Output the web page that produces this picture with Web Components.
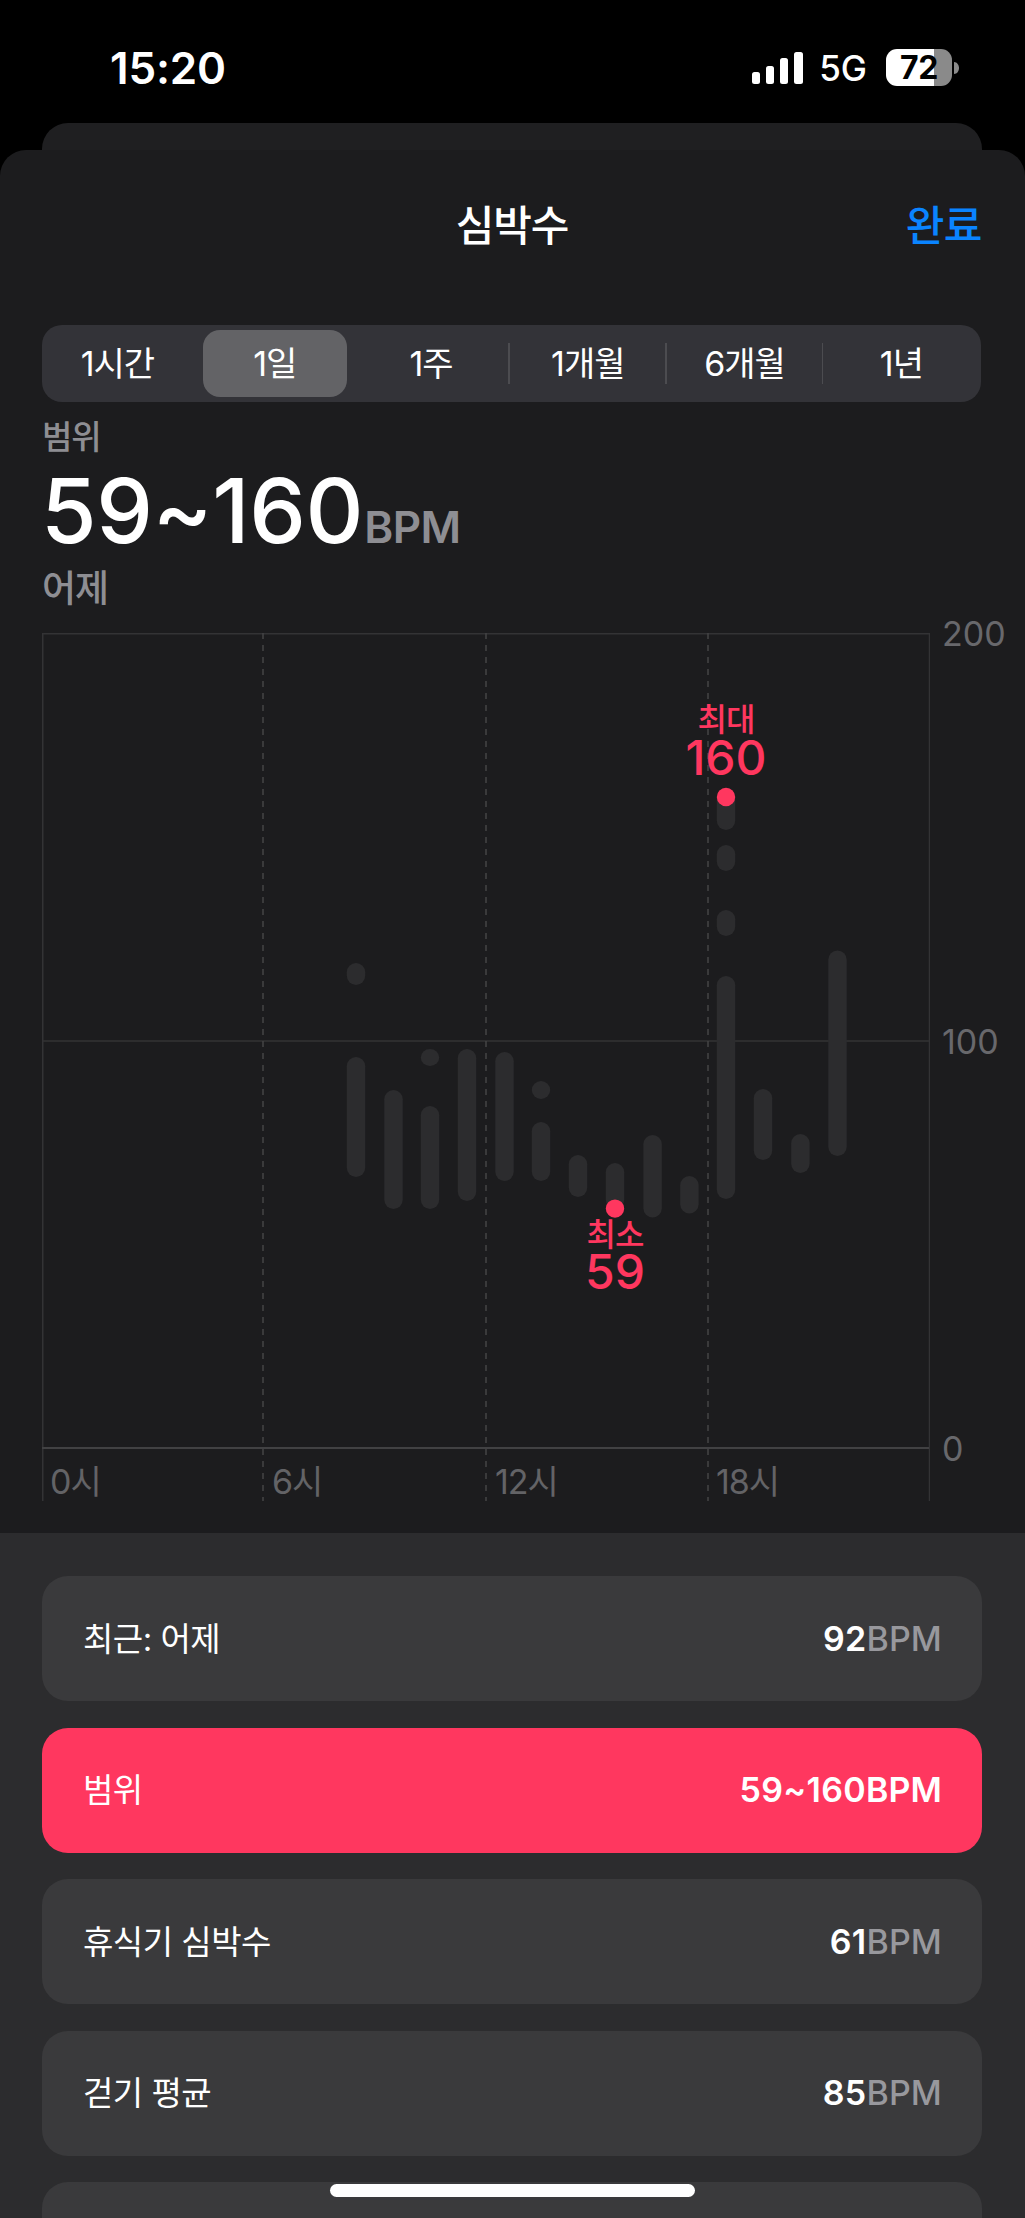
<!DOCTYPE html>
<html lang="ko">
<head>
<meta charset="utf-8">
<title>심박수</title>
<style>
  html, body { margin: 0; background: #000; }
  body {
    width: 1025px;
    height: 2218px;
    overflow: hidden;
    position: relative;
    font-family: Inter, "Noto Sans CJK KR", sans-serif;
    color: #fff;
  }
</style>
</head>
<body>
  <status-bar time="15:20" network="5G" battery="72"></status-bar>
  <hr-sheet>
    <sheet-header slot="top" action="완료">심박수</sheet-header>
    <segment-control slot="top" selected="1" items="1시간,1일,1주,1개월,6개월,1년"></segment-control>
    <range-summary slot="top" label="범위" value="59~160" unit="BPM" period="어제"></range-summary>
    <hr-chart slot="top"></hr-chart>

    <stat-row name="최근: 어제" value="92" unit="BPM"></stat-row>
    <stat-row name="범위" value="59~160" unit="BPM" active></stat-row>
    <stat-row name="휴식기 심박수" value="61" unit="BPM"></stat-row>
    <stat-row name="걷기 평균" value="85" unit="BPM"></stat-row>
    <stat-row></stat-row>
  </hr-sheet>
  <home-indicator></home-indicator>

<script>
class StatusBar extends HTMLElement {
  constructor() {
    super();
    this.attachShadow({ mode: 'open' });
    const level = 72;
    this.shadowRoot.innerHTML = `
    <style>
      :host {
        display: flex;
        align-items: center;
        height: 123px;
        box-sizing: border-box;
        padding: 12px 65px 0 110px;
        color: #fff;
      }
      #time {
        flex: 1;
        font-size: 44px;
        font-weight: 600;
        letter-spacing: -0.2px;
        line-height: 50px;
      }
      #network {
        margin: 0 19px 0 16px;
        font-size: 35px;
        font-weight: 500;
        line-height: 40px;
      }
      #battery {
        width: 66px;
        height: 37px;
        border-radius: 11px;
        background: linear-gradient(90deg, #fff 0 ${level}%, #8a8a8a ${level}% 100%);
        color: #000;
        font-size: 32px;
        font-weight: 700;
        letter-spacing: -0.5px;
        line-height: 37px;
        text-align: center;
      }
      svg { display: block; }
    </style>
    <svg width="51" height="32" viewBox="0 0 51 32" fill="#fff">
      <rect x="0" y="20" width="8" height="12" rx="2.5"/>
      <rect x="14" y="14" width="8" height="18" rx="2.5"/>
      <rect x="28" y="6" width="8" height="26" rx="2.5"/>
      <rect x="42" y="0" width="9" height="32" rx="2.5"/>
    </svg>
    <span id="network"></span>
    <span id="battery"></span>
    <svg width="6" height="12" viewBox="0 0 6 12" style="margin-left:2px"><path d="M0 0c3 0 5 3 5 6s-2 6-5 6z" fill="#8a8a8a"/></svg>
    `;
    const root = this.shadowRoot;
    const time = document.createElement('span');
    time.id = 'time';
    time.textContent = this.getAttribute('time');
    root.insertBefore(time, root.querySelector('svg'));
    root.querySelector('#network').textContent = this.getAttribute('network');
    root.querySelector('#battery').textContent = this.getAttribute('battery');
  }
}

class HrSheet extends HTMLElement {
  constructor() {
    super();
    this.attachShadow({ mode: 'open' });
    this.shadowRoot.innerHTML = `
    <style>
      :host { display: block; }
      #behind {
        height: 27px;
        margin: 0 43px 0 42px;
        background: #1f1f21;
        border-radius: 26px 26px 0 0;
      }
      #sheet {
        background: #1c1c1e;
        border-radius: 26px 26px 0 0;
        padding-bottom: 30px;
      }
      #panel {
        display: flex;
        flex-direction: column;
        gap: 26.5px;
        padding: 43px 43px 0 42px;
        background: #2c2c2e;
      }
    </style>
    <div id="behind"></div>
    <section id="sheet"><slot name="top"></slot></section>
    <section id="panel"><slot></slot></section>
    `;
  }
}

class SheetHeader extends HTMLElement {
  constructor() {
    super();
    this.attachShadow({ mode: 'open' });
    this.shadowRoot.innerHTML = `
    <style>
      :host {
        display: grid;
        grid-template-columns: 1fr auto 1fr;
        align-items: center;
        box-sizing: border-box;
        height: 146px;
        padding: 5px 43px 0 42px;
        font-size: 42px;
        line-height: 50px;
      }
      #title { grid-column: 2; font-weight: 500; letter-spacing: -1.2px; color: #fff; }
      #action { justify-self: end; font-weight: 500; letter-spacing: -0.5px; color: #0a84ff; }
    </style>
    <span id="title"><slot></slot></span>
    <span id="action"></span>
    `;
    this.shadowRoot.querySelector('#action').textContent = this.getAttribute('action');
  }
}

class SegmentControl extends HTMLElement {
  constructor() {
    super();
    this.attachShadow({ mode: 'open' });
    const items = this.getAttribute('items').split(',');
    const selected = Number(this.getAttribute('selected'));
    this.shadowRoot.innerHTML = `
    <style>
      :host {
        display: block;
        height: 77px;
        margin: 29px 44px 0 42px;
        padding: 5px 0;
        box-sizing: border-box;
        background: #333338;
        border-radius: 20px;
        color: #fff;
        font-size: 34px;
        letter-spacing: -1px;
        line-height: 67px;
      }
      #track {
        display: grid;
        grid-template-columns: repeat(6, 156.8px);
        margin-left: -3px;
      }
      .seg {
        position: relative;
        height: 67px;
        text-align: center;
      }
      .seg.on {
        margin: 0 6px 0 7px;
        background: #636366;
        border-radius: 17px;
      }
      .seg.div::before {
        content: '';
        position: absolute;
        left: -1px;
        top: 13px;
        height: 41px;
        width: 1.5px;
        background: #4c4c50;
      }
    </style>
    <div id="track">
    ${items.map((t, i) => {
      const divided = i > selected + 1;
      return `<div class="seg${i === selected ? ' on' : ''}${divided ? ' div' : ''}">${t}</div>`;
    }).join('')}
    </div>
    `;
  }
}

class RangeSummary extends HTMLElement {
  constructor() {
    super();
    this.attachShadow({ mode: 'open' });
    this.shadowRoot.innerHTML = `
    <style>
      :host {
        display: block;
        margin: 15px 43px 24px 42px;
        color: #8e8e93;
      }
      .small {
        font-size: 33px;
        line-height: 40px;
        letter-spacing: -1px;
        font-weight: 500;
      }
      #big {
        margin: 4px 0 8px -1px;
        line-height: 100px;
        font-size: 90px;
        font-weight: 500;
        letter-spacing: -0.4px;
        color: #fff;
      }
      #unit { font-size: 44px; font-weight: 600; line-height: 0; letter-spacing: -0.5px; color: #8e8e93; margin-left: 1px; }
      #period { font-size: 37px; }
    </style>
    <div class="small" id="label"></div>
    <div id="big"><span id="value"></span><span id="unit"></span></div>
    <div class="small" id="period"></div>
    `;
    for (const key of ['label', 'value', 'unit', 'period']) {
      this.shadowRoot.querySelector('#' + key).textContent = this.getAttribute(key);
    }
  }
}

// chart geometry is in px from the plot's top left corner (page 42,633)
const PLOT_W = 887, PLOT_H = 815, TOTAL_H = 870;
const BAR_W = 18.4;
const BARS = [
  [314, [[330, 352], [424, 544]]],
  [351.5, [[457, 576]]],
  [388, [[416, 433], [473, 576]]],
  [425, [[416, 568]]],
  [462.5, [[419, 548]]],
  [499, [[448, 466], [489, 548]]],
  [536, [[522, 564]]],
  [573, [[530, 576]]],
  [610.6, [[502, 584.5]]],
  [647.4, [[543, 580.5]]],
  [684, [[155, 197], [212, 238], [277, 303], [343, 566]]],
  [721, [[456, 527]]],
  [758.4, [[501, 540]]],
  [795.5, [[317.5, 523]]],
];
const GRID_X = [221, 444, 666];
const HOURS = [['0시', 8], ['6시', 230], ['12시', 453], ['18시', 674]];
const TICKS = [['200', 0], ['100', 408], ['0', 815]];

class HrChart extends HTMLElement {
  constructor() {
    super();
    this.attachShadow({ mode: 'open' });
    const bars = BARS.map(([x, segs]) => segs.map(([a, b]) =>
      `<rect x="${x - BAR_W / 2}" y="${a}" width="${BAR_W}" height="${b - a}" rx="${BAR_W / 2}"/>`
    ).join('')).join('');
    this.shadowRoot.innerHTML = `
    <style>
      :host {
        display: block;
        position: relative;
        height: ${TOTAL_H}px;
        margin-left: 42px;
        font-size: 34px;
        color: #636366;
      }
      svg { position: absolute; left: 0; top: 0; }
      span { position: absolute; line-height: 40px; white-space: nowrap; }
      .hour { top: 829px; letter-spacing: -1px; }
      .tick { left: 900px; margin-top: -19px; color: #68686c; }
      .pink { color: #ff375f; transform: translateX(-50%); }
      .name { font-size: 32px; line-height: 30px; font-weight: 500; letter-spacing: -1px; }
      .num { font-size: 48px; line-height: 44px; font-weight: 500; }
    </style>
    <svg width="${PLOT_W + 1}" height="${TOTAL_H}" viewBox="0 0 ${PLOT_W + 1} ${TOTAL_H}">
      <g stroke="#333335" stroke-width="1.5" fill="none">
        <path d="M0 .75H${PLOT_W}M0 408H${PLOT_W}"/>
        <path d="M.75 0V868M${PLOT_W}.5 0V868"/>
        <path d="M0 815H${PLOT_W}" stroke="#414143" stroke-width="2"/>
        ${GRID_X.map(x => `<path d="M${x} 0V868" stroke="#444446" stroke-dasharray="6 6"/>`).join('')}
      </g>
      <g fill="#2c2c2e">${bars}</g>
      <circle cx="684" cy="164" r="9.2" fill="#ff375f"/>
      <circle cx="573" cy="575.6" r="9.2" fill="#ff375f"/>
    </svg>
    ${HOURS.map(([t, x]) => `<span class="hour" style="left:${x}px">${t}</span>`).join('')}
    ${TICKS.map(([t, y]) => `<span class="tick" style="top:${y}px">${t}</span>`).join('')}
    <span class="pink name" style="left:684px;top:72px">최대</span>
    <span class="pink num" style="left:684px;top:103px">160</span>
    <span class="pink name" style="left:573px;top:587px">최소</span>
    <span class="pink num" style="left:573px;top:617px">59</span>
    `;
  }
}

class StatRow extends HTMLElement {
  constructor() {
    super();
    this.attachShadow({ mode: 'open' });
    this.shadowRoot.innerHTML = `
    <style>
      :host {
        display: flex;
        align-items: center;
        justify-content: space-between;
        flex: none;
        height: 125px;
        padding: 0 40px 0 41px;
        box-sizing: border-box;
        background: #3a3a3c;
        border-radius: 26px;
        color: #fff;
        font-size: 33px;
        line-height: 40px;
      }
      :host([active]) { background: #ff375f; }
      #name { letter-spacing: -0.5px; }
      #value { font-weight: 600; font-size: 34px; letter-spacing: 0.3px; }
      #unit { font-weight: 500; font-size: 34px; letter-spacing: 0.1px; color: #98989d; }
      :host([active]) #unit { color: #fff; font-weight: 600; }
    </style>
    <span id="name"></span>
    <span><span id="value"></span><span id="unit"></span></span>
    `;
    for (const key of ['name', 'value', 'unit']) {
      this.shadowRoot.querySelector('#' + key).textContent = this.getAttribute(key);
    }
  }
}

class HomeIndicator extends HTMLElement {
  constructor() {
    super();
    this.attachShadow({ mode: 'open' });
    this.shadowRoot.innerHTML = `
    <style>
      :host {
        position: absolute;
        left: 330px;
        top: 2184px;
        width: 365px;
        height: 13px;
        border-radius: 7px;
        background: #fff;
      }
    </style>
    `;
  }
}

customElements.define('status-bar', StatusBar);
customElements.define('hr-sheet', HrSheet);
customElements.define('sheet-header', SheetHeader);
customElements.define('segment-control', SegmentControl);
customElements.define('range-summary', RangeSummary);
customElements.define('hr-chart', HrChart);
customElements.define('stat-row', StatRow);
customElements.define('home-indicator', HomeIndicator);
</script>
</body>
</html>
